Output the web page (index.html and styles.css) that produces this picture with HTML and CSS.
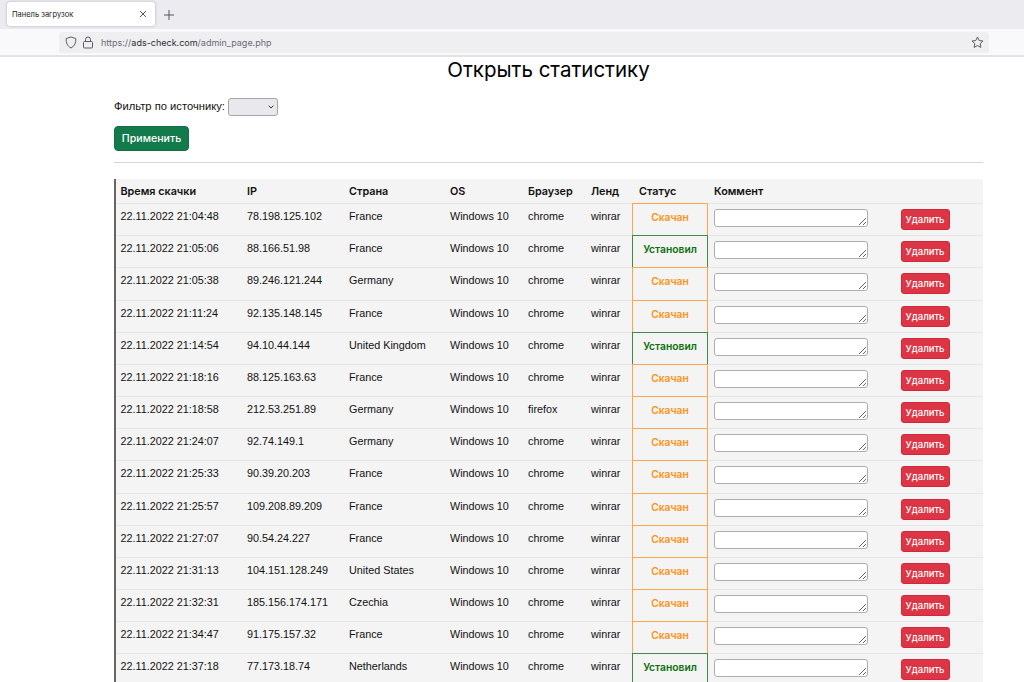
FILE: index.html
```html
<!DOCTYPE html>
<html lang="ru">

<head>
    <meta charset="UTF-8">
    <title>Панель загрузок</title>
    <link rel="stylesheet" href="styles.css">
</head>

<body>
    <div class="browser">
        <div class="tabbar">
            <div class="tab">
                <span class="tab-title">Панель загрузок</span>
                <svg class="tab-close" width="8" height="8" viewBox="0 0 8 8"><path d="M1 1l6 6M7 1L1 7"/></svg>
            </div>
            <svg class="tab-new" width="10" height="10" viewBox="0 0 10 10"><path d="M5 0v10M0 5h10"/></svg>
        </div>
        <div class="toolbar">
            <div class="urlbar">
                <svg class="url-icon" width="12" height="13" viewBox="0 0 12 13"><path d="M6 1l4.800 1.500c.2 4.500-1.200 7.600-4.800 9.500C2.400 10.100 1 7 1.200 2.500z"/></svg>
                <svg class="url-icon" width="12" height="13" viewBox="0 0 12 13"><rect x="1.500" y="5.500" width="9" height="6.500" rx="1"/><path d="M3.500 5.500V3.500a2.500 2.500 0 0 1 5 0v2"/></svg>
                <span class="url"><span class="url-dim">https://</span>ads-check.com<span class="url-dim">/admin_page.php</span></span>
                <svg class="url-star" width="13" height="13" viewBox="0 0 13 13"><path d="M6.500 1l1.700 3.500 3.800.5-2.800 2.600.7 3.800-3.400-1.800-3.400 1.800.7-3.800L1 5l3.800-.5z"/></svg>
            </div>
        </div>
    </div>

    <div class="container">
        <h1>Открыть статистику</h1>
        <form class="filter">
            <label for="source">Фильтр по источнику:</label>
            <span class="select-wrap">
                <select id="source"><option></option></select>
                <svg class="select-arrow" width="6" height="4" viewBox="0 0 6 4"><path d="M.7.7L3 3l2.300-2.300"/></svg>
            </span>
            <div><button type="button" class="btn-apply">Применить</button></div>
        </form>
        <hr>
        <table>
            <thead>
                <tr><th>Время скачки</th><th>IP</th><th>Страна</th><th>OS</th><th>Браузер</th><th>Ленд</th><th>Статус</th><th>Коммент</th><th></th></tr>
            </thead>
            <tbody>
                <tr><td>22.11.2022 21:04:48</td><td>78.198.125.102</td><td>France</td><td>Windows 10</td><td>chrome</td><td>winrar</td><td class="status loaded">Скачан</td><td><textarea></textarea></td><td class="del"><button type="button">Удалить</button></td></tr>
                <tr><td>22.11.2022 21:05:06</td><td>88.166.51.98</td><td>France</td><td>Windows 10</td><td>chrome</td><td>winrar</td><td class="status installed">Установил</td><td><textarea></textarea></td><td class="del"><button type="button">Удалить</button></td></tr>
                <tr class="tall"><td>22.11.2022 21:05:38</td><td>89.246.121.244</td><td>Germany</td><td>Windows 10</td><td>chrome</td><td>winrar</td><td class="status loaded">Скачан</td><td><textarea></textarea></td><td class="del"><button type="button">Удалить</button></td></tr>
                <tr><td>22.11.2022 21:11:24</td><td>92.135.148.145</td><td>France</td><td>Windows 10</td><td>chrome</td><td>winrar</td><td class="status loaded">Скачан</td><td><textarea></textarea></td><td class="del"><button type="button">Удалить</button></td></tr>
                <tr><td>22.11.2022 21:14:54</td><td>94.10.44.144</td><td>United Kingdom</td><td>Windows 10</td><td>chrome</td><td>winrar</td><td class="status installed">Установил</td><td><textarea></textarea></td><td class="del"><button type="button">Удалить</button></td></tr>
                <tr><td>22.11.2022 21:18:16</td><td>88.125.163.63</td><td>France</td><td>Windows 10</td><td>chrome</td><td>winrar</td><td class="status loaded">Скачан</td><td><textarea></textarea></td><td class="del"><button type="button">Удалить</button></td></tr>
                <tr><td>22.11.2022 21:18:58</td><td>212.53.251.89</td><td>Germany</td><td>Windows 10</td><td>firefox</td><td>winrar</td><td class="status loaded">Скачан</td><td><textarea></textarea></td><td class="del"><button type="button">Удалить</button></td></tr>
                <tr><td>22.11.2022 21:24:07</td><td>92.74.149.1</td><td>Germany</td><td>Windows 10</td><td>chrome</td><td>winrar</td><td class="status loaded">Скачан</td><td><textarea></textarea></td><td class="del"><button type="button">Удалить</button></td></tr>
                <tr class="tall"><td>22.11.2022 21:25:33</td><td>90.39.20.203</td><td>France</td><td>Windows 10</td><td>chrome</td><td>winrar</td><td class="status loaded">Скачан</td><td><textarea></textarea></td><td class="del"><button type="button">Удалить</button></td></tr>
                <tr><td>22.11.2022 21:25:57</td><td>109.208.89.209</td><td>France</td><td>Windows 10</td><td>chrome</td><td>winrar</td><td class="status loaded">Скачан</td><td><textarea></textarea></td><td class="del"><button type="button">Удалить</button></td></tr>
                <tr><td>22.11.2022 21:27:07</td><td>90.54.24.227</td><td>France</td><td>Windows 10</td><td>chrome</td><td>winrar</td><td class="status loaded">Скачан</td><td><textarea></textarea></td><td class="del"><button type="button">Удалить</button></td></tr>
                <tr><td>22.11.2022 21:31:13</td><td>104.151.128.249</td><td>United States</td><td>Windows 10</td><td>chrome</td><td>winrar</td><td class="status loaded">Скачан</td><td><textarea></textarea></td><td class="del"><button type="button">Удалить</button></td></tr>
                <tr><td>22.11.2022 21:32:31</td><td>185.156.174.171</td><td>Czechia</td><td>Windows 10</td><td>chrome</td><td>winrar</td><td class="status loaded">Скачан</td><td><textarea></textarea></td><td class="del"><button type="button">Удалить</button></td></tr>
                <tr><td>22.11.2022 21:34:47</td><td>91.175.157.32</td><td>France</td><td>Windows 10</td><td>chrome</td><td>winrar</td><td class="status loaded">Скачан</td><td><textarea></textarea></td><td class="del"><button type="button">Удалить</button></td></tr>
                <tr><td>22.11.2022 21:37:18</td><td>77.173.18.74</td><td>Netherlands</td><td>Windows 10</td><td>chrome</td><td>winrar</td><td class="status installed">Установил</td><td><textarea></textarea></td><td class="del"><button type="button">Удалить</button></td></tr>
            </tbody>
        </table>
    </div>
</body>

</html>
```

FILE: styles.css
```css
html, body {
    height: 682px;
    overflow: hidden;
}

body {
    margin: 0;
    background-color: #fff;
    color: #111;
    font-family: "Liberation Sans", Arial, sans-serif;
    font-size: 10.8px;
}

/* Browser frame */
.browser {
    border-bottom: 2px solid #e3e3e5;
    font-family: Inter, sans-serif;
}

.tabbar {
    display: flex;
    align-items: center;
    height: 29px;
    background-color: #ecebf0;
    padding-left: 7px;
    box-sizing: border-box;
}

.tab {
    display: flex;
    align-items: center;
    justify-content: space-between;
    width: 148px;
    height: 24px;
    margin-top: -1px;
    padding: 0 8px 0 5px;
    box-sizing: border-box;
    background-color: #fff;
    border-radius: 3px;
    box-shadow: 0 0 3px rgba(0, 0, 0, 0.25);
}

.tab-title {
    font-size: 7.5px;
    color: #222;
}

.tab-close {
    stroke: #55555c;
    fill: none;
}

.tab-new {
    margin-left: 9px;
    stroke: #55555c;
    fill: none;
}

.toolbar {
    height: 26px;
    box-sizing: border-box;
    background-color: #f9f9fb;
    padding: 3px 35px 0 59px;
}

.urlbar {
    display: flex;
    align-items: center;
    gap: 5px;
    height: 21px;
    padding: 0 5px 0 6px;
    background-color: #efeff2;
    border-radius: 3px;
}

.url-icon, .url-star {
    stroke: #5b5b66;
    fill: none;
}

.url {
    margin-left: 2px;
    font-size: 9px;
    color: #2b2b33;
}

.url-dim {
    color: #6b6b75;
}

.url-star {
    margin-left: auto;
}

/* Page */
.container {
    margin: 0 41px 0 114px;
}

h1 {
    margin: 0;
    text-align: center;
    font-family: Inter, sans-serif;
    font-size: 20.500px;
    font-weight: 400;
    color: #000;
    line-height: 25px;
}

.filter {
    margin-top: 16px;
}

label {
    font-size: 11.200px;
}

.select-wrap {
    position: relative;
    display: inline-block;
    vertical-align: middle;
}

select {
    display: block;
    width: 50px;
    height: 18px;
    margin: 0;
    appearance: none;
    background-color: #e9e9ed;
    border: 1px solid #a5a5ab;
    border-radius: 3px;
}

.select-arrow {
    position: absolute;
    right: 4px;
    top: 7px;
    fill: none;
    stroke: #333;
}

.btn-apply {
    display: block;
    margin-top: 10px;
    width: 75px;
    height: 25px;
    padding: 0;
    border: 1px solid #146c43;
    border-radius: 4px;
    background-color: #137a4c;
    color: #fff;
    font-family: Inter, sans-serif;
    font-size: 10.600px;
    font-weight: 500;
}

hr {
    margin: 11px 0 16px;
    border: none;
    border-top: 1px solid #d8d8d8;
}

table {
    width: 100%;
    table-layout: fixed;
    border-collapse: separate;
    border-spacing: 0;
    background-color: #f4f4f4;
    border-left: 2px solid #666;
}

th, td {
    padding: 0 0 0 4.500px;
    text-align: left;
    vertical-align: top;
    border-bottom: 1px solid #e6e6e6;
    box-sizing: border-box;
}

th {
    height: 25px;
    padding-top: 2px;
    padding-bottom: 1px;
    line-height: 21px;
    font-family: Inter, sans-serif;
    font-weight: 600;
    color: #111;
}

td {
    height: 32px;
    padding-top: 5px;
    line-height: 14px;
}

.tall td {
    height: 33px;
}

th:nth-child(1) { width: 126.500px; }
th:nth-child(2) { width: 102px; }
th:nth-child(3) { width: 101px; }
th:nth-child(4) { width: 78px; }
th:nth-child(5) { width: 63px; }
th:nth-child(6) { width: 45.500px; }
th:nth-child(7) { width: 76px; padding-left: 7px; }
th:nth-child(8) { width: 188px; padding-left: 6px; }

td.status {
    padding: 6px 0 0;
    border: 1px solid;
    border-top: none;
    text-align: center;
    font-family: Inter, sans-serif;
    font-weight: 600;
    font-size: 10.300px;
}

.loaded {
    color: #ff9319;
    border-color: #ffa64d !important;
    box-shadow: 0 -1px 0 #ffa64d;
}

.installed {
    color: #0a6e0a;
    border-color: #3f8a46 !important;
    box-shadow: 0 -1px 0 #3f8a46;
}

td:nth-child(8) {
    padding-left: 6px;
}

textarea {
    display: block;
    width: 154px;
    height: 18px;
    box-sizing: border-box;
    margin: 0;
    padding: 0;
    background-color: #fff;
    border: 1px solid #aeaeb2;
    border-radius: 3px;
}

.del button {
    display: block;
    width: 49px;
    height: 21px;
    padding: 0;
    border: 1px solid #d7253a;
    border-radius: 3px;
    background-color: #dc3545;
    color: #fff;
    font-family: Inter, sans-serif;
    font-size: 9.500px;
    font-weight: 500;
}
```
